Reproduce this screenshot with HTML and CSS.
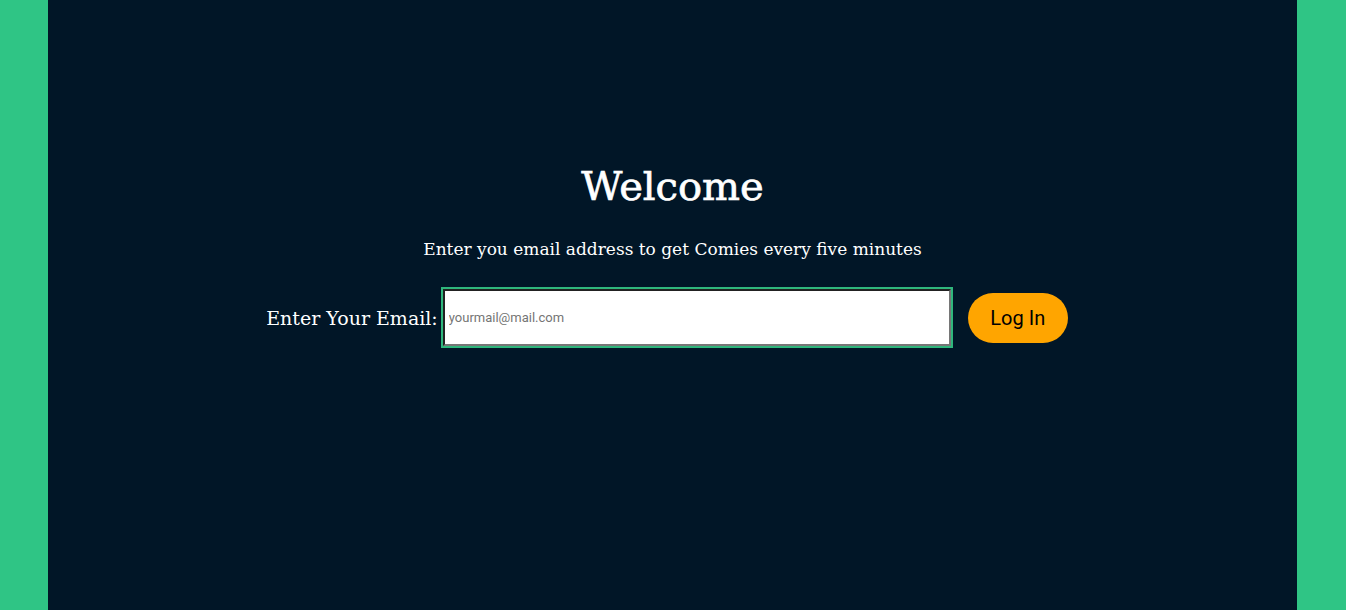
FILE: index.html
```html
<!DOCTYPE html>
<html>
<head>
<meta charset="utf-8">
<link rel="stylesheet" href="styles.css">
</head>
<body>
<main class="page">
  <section class="hero">
    <h1 class="title">Welcome</h1>
    <p class="subtitle">Enter you email address to get Comies every five minutes</p>
    <form class="login">
      <label class="label" for="email">Enter Your Email:</label>
      <input class="email" id="email" type="email" placeholder="yourmail@mail.com">
      <button class="btn" type="button">Log In</button>
    </form>
  </section>
</main>
</body>
</html>
```
FILE: styles.css
```css
html, body {
  margin: 0;
  height: 100%;
}
body {
  background: #2fc585;
  padding: 0 49px 0 48px;
  box-sizing: border-box;
}
.page {
  background: #011627;
  height: 100%;
  display: flex;
  justify-content: center;
}
.hero {
  padding-top: 160px;
  display: flex;
  flex-direction: column;
  align-items: center;
  color: #fff;
  font-family: "DejaVu Serif", serif;
}
.title {
  margin: 0;
  font-size: 40px;
  font-weight: normal;
  line-height: 52px;
  -webkit-text-stroke: 0.7px #fff;
}
.subtitle {
  margin: 25px 0 0;
  font-size: 17px;
  line-height: 24px;
}
.login {
  margin-top: 26px;
  display: flex;
  align-items: center;
}
.label {
  font-size: 19px;
  margin-right: 3px;
}
.email {
  box-sizing: border-box;
  width: 508px;
  height: 57px;
  border: 2px inset #767676;
  outline: 2px solid #2fb67c;
  margin: 2px;
  padding: 0 4px;
  font-family: Roboto, sans-serif;
  font-size: 13px;
  background: #fff;
}
.email::placeholder {
  color: #757575;
}
.btn {
  margin-left: 15px;
  margin-right: 11px;
  width: 100px;
  height: 50px;
  border: none;
  border-radius: 25px;
  background: #ffa500;
  color: #000;
  font-family: Roboto, sans-serif;
  font-size: 20px;
  cursor: pointer;
}
```
